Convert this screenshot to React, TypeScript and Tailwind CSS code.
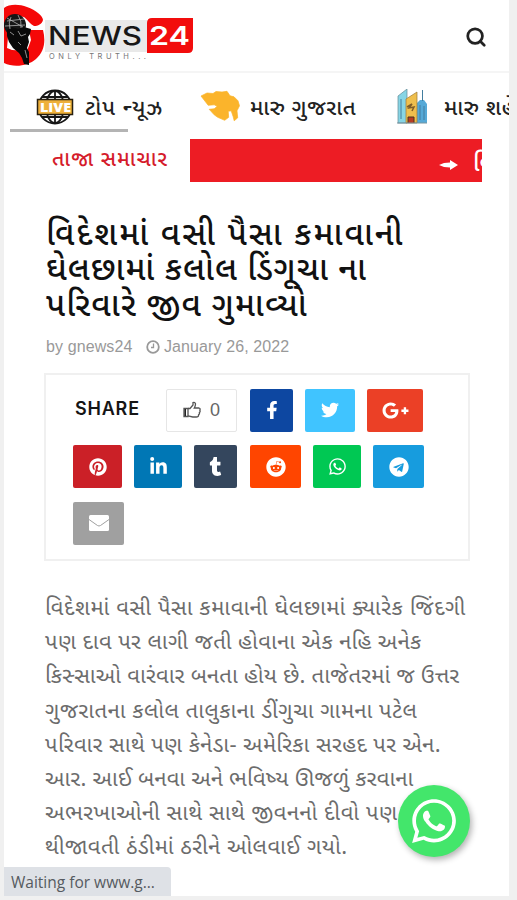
import React from "react";
import { FaFacebookF, FaTwitter, FaLinkedinIn, FaTumblr, FaWhatsapp, FaPinterest, FaTelegram, FaReddit, FaGooglePlusG, FaEnvelope } from "react-icons/fa";
import { FiSearch } from "react-icons/fi";

const guj = "font-['Noto_Sans_Gujarati','Noto_Sans','Liberation_Sans',sans-serif]";
const sans = "font-['Liberation_Sans',Arial,sans-serif]";

function Logo() {
  return (
    <div className="flex h-[72px] items-start">
      <svg className="mt-[4px] h-[64px] w-[41px] shrink-0" viewBox="4 4 41 64">
        <path d="M4 8C9 4 19 4 27 7c9 3 16 9 16 13-1 4-5 6-9 6-4-2-6-6-10-9L10 15l-3 33 5 2 15 1 4-11-2-10h14c3 12 1 22-7 29-8 7-22 9-32 4z" fill="#f50808" />
        <circle cx="15" cy="25" r="11" fill="#161616" />
        <path d="M7 30l5-3 6 2 6-2 7 2-1 5-2 3 1 5-2 6 2 4v13l-5-1-2-6-3-5-6-5-4-6-2-6z" fill="#090909" />
        <path d="M7 21l17-2M5 26l20-1M11 17q-3 6-1 12M18 15q4 6 3 13M7 18l16 9M10 32l4 3m4-4 3 5 5-2M18 42l3 3M25 50l2 8" fill="none" stroke="#b0b0b0" strokeWidth=".8" />
      </svg>
      <div className="mt-[20px] w-[102px] shrink-0">
        <div className="h-[32px] bg-[#e9e9e9]">
          <svg className="block h-[32px] w-[102px]" viewBox="0 0 102 32">
            <text x="3" y="25" textLength="94" lengthAdjust="spacingAndGlyphs" className="font-['Inter','Liberation_Sans',sans-serif] text-[25px] font-medium" fill="#171717">NEWS</text>
          </svg>
        </div>
        <svg className="block h-[9px] w-[102px]" viewBox="0 0 102 9">
          <text x="4" y="6.5" textLength="97" lengthAdjust="spacing" className="font-['Inter','Liberation_Sans',sans-serif] text-[7.5px]" fill="#777">ONLY TRUTH...</text>
        </svg>
      </div>
      <svg className="mt-[18px] h-[35px] w-[46px]" viewBox="0 0 46 35">
        <path d="M5 0h41v30q0 5-5 5H0V5q0-5 5-5z" fill="#f20d0d" />
        <text x="2" y="27" textLength="41" lengthAdjust="spacingAndGlyphs" className="font-['Inter','Liberation_Sans',sans-serif] text-[26px] font-semibold" fill="#fff">24</text>
      </svg>
    </div>
  );
}

function Live() {
  return (
    <svg className="h-[36px] w-[38px] shrink-0" viewBox="0 0 38 36">
      <g fill="none" stroke="#161616" strokeWidth="1.8"><circle cx="19" cy="18" r="16.5" /><ellipse cx="19" cy="18" rx="9" ry="16" /><path d="M19 2v32M6 8h26M6 28h26" /></g>
      <path d="M1.5 10.5h35v15h-35z" fill="#eeb03b" stroke="#282010" strokeWidth="1.5" />
      <text x="4" y="22.5" textLength="31" lengthAdjust="spacingAndGlyphs" className="font-['Open_Sans',sans-serif] text-[12px] font-extrabold" fill="#fff">LIVE</text>
    </svg>
  );
}

function Gujarat() {
  return (
    <svg className="h-[33px] w-[40px] shrink-0" viewBox="200 91 40 33">
      <path d="M201 97l6-3 6 .5 3-2 6 .5 5-.7 3 4.5 4 1 4 4 1.5 5-2.5 5 .7 7-3.5 3-1-4-2-6-3 .5.5 6-4 3-7-3-3.5-2.5-5-5.5 5-.5 3-2.5-3-1.5-6 .5z" fill="#fbb42b" stroke="#fbb42b" strokeLinejoin="round" strokeWidth=".7" />
    </svg>
  );
}

function City() {
  return (
    <svg className="h-[36px] w-[30px] shrink-0" viewBox="398 89 30 36">
      <path d="M399 96l9-7v34h-9z" fill="#87d5e5" stroke="#638b96" strokeWidth=".7" />
      <path d="M418 103l3-3h4l3 4v19h-10z" fill="#56a9d7" />
      <path d="M407 99l11-7v31h-11z" fill="#efbf4d" stroke="#9c7a36" strokeWidth=".7" />
      <path d="M423.500 90v11M402 99v20M421 105v15M425 106v14" stroke="#427d9f" />
      <path d="M408 107l5-3-3 4 5-1-2 4" fill="none" stroke="#805d28" strokeWidth="1.5" />
      <path d="M409 123v-6h6v6" fill="#b83c23" stroke="#4a3422" />
      <path d="M398 123h30" stroke="#7694a0" />
    </svg>
  );
}

function Share({ c, children }: { c: string; children: React.ReactNode }) {
  return <div className={"flex h-[43px] items-center justify-center rounded-[2px] text-white " + c}>{children}</div>;
}

const title = [
  ["વિદેશમાં વસી પૈસા કમાવાની", "tracking-[2px]"],
  ["ઘેલછામાં કલોલ ડિંગૂચા ના", "tracking-[0.95px]"],
  ["પરિવારે જીવ ગુમાવ્યો", "tracking-[1.1px]"],
];
const body = [
  ["વિદેશમાં વસી પૈસા કમાવાની ઘેલછામાં ક્યારેક જિંદગી", "tracking-[0.59px]"],
  ["પણ દાવ પર લાગી જતી હોવાના એક નહિ અનેક", "tracking-[0.4px]"],
  ["કિસ્સાઓ વારંવાર બનતા હોય છે. તાજેતરમાં જ ઉત્તર", "tracking-[0.22px]"],
  ["ગુજરાતના કલોલ તાલુકાના ડીંગુચા ગામના પટેલ", "tracking-[0.49px]"],
  ["પરિવાર સાથે પણ કેનેડા- અમેરિકા સરહદ પર એન.", "tracking-[0.39px]"],
  ["આર. આઈ બનવા અને ભવિષ્ય ઊજળું કરવાના", "tracking-[0.21px]"],
  ["અભરખાઓની સાથે સાથે જીવનનો દીવો પણ", "tracking-[0.5px]"],
  ["થીજાવતી ઠંડીમાં ઠરીને ઓલવાઈ ગયો.", "tracking-[0.46px]"],
];

export default function App() {
  return (
    <div className={"h-[900px] w-[517px] overflow-hidden bg-[#f0f0f0] pl-[4px] " + sans}>
      <div className="relative h-[896px] w-[505px] overflow-hidden bg-white">
        <header className="flex h-[73px] justify-between border-b-2 border-[#f5f5f5] pr-[22px]">
          <Logo />
          <FiSearch className="mt-[26px] h-[22px] w-[22px] text-[#222]" strokeWidth={3} />
        </header>
        <nav className={"flex h-[56px] items-center whitespace-nowrap pl-[32px] pt-[11px] text-[22px] font-medium text-[#222] " + guj}>
          <Live />
          <span className="ml-[11px] w-[79px] shrink-0 pt-[6px] tracking-[1.1px]">ટોપ ન્યૂઝ</span>
          <span className="ml-[36px] flex"><Gujarat /></span>
          <span className="ml-[10px] w-[107px] shrink-0 pt-[6px] tracking-[0.55px]">મારુ ગુજરાત</span>
          <span className="ml-[40px] flex"><City /></span>
          <span className="ml-[17px] pt-[6px] tracking-[0.55px]">મારુ શહેર</span>
        </nav>
        <div className="ml-[6px] h-[3px] w-[118px] bg-[#b4b4b4]" />
        <div className={"mt-[7px] flex h-[43px] " + guj}>
          <div className="w-[186px] shrink-0 whitespace-nowrap pl-[48px] text-[21px] font-medium leading-[44px] tracking-[1.1px] text-[#d51c2b]">તાજા સમાચાર</div>
          <div className="flex w-[292px] items-center overflow-hidden whitespace-nowrap bg-[#ed1c24] pl-[249px] text-white">
            <svg className="mt-[9px] h-[12px] w-[20px] shrink-0" viewBox="0 0 20 12"><path d="M0 6l5-2 6-.5V1l8 5-8 5V8.500L5 8z" fill="#fff" /></svg>
            <span className="ml-[14px] pt-[8px] text-[24px] font-medium">વિદેશમાં</span>
          </div>
        </div>
        <h1 className={"mt-[37px] whitespace-nowrap pl-[42px] text-[33px] font-medium leading-[35.3px] text-[#111] " + guj}>
          {title.map(([t, c]) => <span key={t} className={"block " + c}>{t}</span>)}
        </h1>
        <div className="mt-[12px] flex h-[20px] items-center pl-[42px] text-[16px] text-[#999]">
          <span className="w-[87px] tracking-[0.1px]">by gnews24</span>
          <svg className="ml-[13px] h-[14px] w-[14px]" viewBox="0 0 14 14" fill="none" stroke="#999" strokeWidth="1.8"><circle cx="7" cy="7" r="5.8" /><path d="M7.500 3.500v4H5" strokeWidth="1.3" /></svg>
          <span className="ml-[4px] tracking-[0.1px]">January 26, 2022</span>
        </div>
        <section className="ml-[40px] mt-[16px] h-[188px] w-[426px] border-2 border-[#f0f0f0] pl-[27px] pt-[14px]">
          <div className="flex">
            <div className="w-[93px] pl-[2px] pt-[9px] font-['Inter',sans-serif] text-[18px] font-semibold leading-[22px] tracking-[0.8px] text-[#151515]">SHARE</div>
            <div className="flex h-[43px] w-[71px] items-center justify-center gap-[9px] rounded-[2px] border border-[#e6e6e6] text-[18px] text-[#666]">
              <svg className="h-[18px] w-[18px]" viewBox="0 0 18 18" fill="none" stroke="#555" strokeWidth="1.3"><path d="M5 7.500h2L10 4V1.500q2-.8 2.500 1.500 0 2-1.200 4H16q1.700.5.8 2.200.8 1.300-.4 2.300.4 1.400-.8 2.200.1 2.300-2.400 2.300H9.800L5 14.800" /><path d="M1 7.500h4v8H1z" /><path d="M1.500 8H3v7H1.500z" fill="#222" stroke="none" /></svg>
              <span>0</span>
            </div>
            <Share c="ml-[13px] w-[43px] bg-[#0d47a1]"><FaFacebookF size={18} /></Share>
            <Share c="ml-[12px] w-[50px] bg-[#40c4ff]"><FaTwitter size={18} /></Share>
            <Share c="ml-[12px] w-[56px] bg-[#eb4026]"><FaGooglePlusG size={27} /></Share>
          </div>
          <div className="mt-[13.5px] flex">
            <Share c="w-[49px] bg-[#cb2027]"><FaPinterest size={18} /></Share>
            <Share c="ml-[12px] w-[48px] bg-[#0077b5]"><FaLinkedinIn size={19} /></Share>
            <Share c="ml-[12px] w-[43px] bg-[#34465d]"><FaTumblr size={19} /></Share>
            <Share c="ml-[13px] w-[51px] bg-[#ff4500]"><FaReddit size={20} /></Share>
            <Share c="ml-[12px] w-[48px] bg-[#00c853]"><FaWhatsapp size={19} /></Share>
            <Share c="ml-[12px] w-[51px] bg-[#179cde]"><FaTelegram size={20} /></Share>
          </div>
          <div className="mt-[13.5px] flex"><Share c="w-[51px] bg-[#a0a0a0]">
            <svg className="h-[16px] w-[20px]" viewBox="0 0 20 16"><rect width="20" height="16" rx="1.500" fill="#fff" /><path d="M0 4.500l8.500 6q1.500 1 3 0l8.500-6" fill="none" stroke="#a0a0a0" /></svg>
          </Share></div>
        </section>
        <article className={"mt-[32px] whitespace-nowrap pl-[41px] text-[22px] leading-[34.2px] text-[#6c6c6c] " + guj}>
          {body.map(([t, c]) => <p key={t} className={c}>{t}</p>)}
        </article>
        <div className="absolute bottom-0 left-0 h-[29px] w-[167px] rounded-tr-[4px] bg-[#dee1e6] pl-[7px] font-['Open_Sans',sans-serif] text-[15.5px] leading-[31px] text-[#555a60]">Waiting for www.g...</div>
        <div className="absolute left-[394px] top-[785px] flex h-[72px] w-[72px] items-center justify-center rounded-full bg-[#43e66b] text-white shadow-[2px_3px_6px_rgba(0,0,0,0.3)]"><FaWhatsapp size={50} /></div>
      </div>
    </div>
  );
}
